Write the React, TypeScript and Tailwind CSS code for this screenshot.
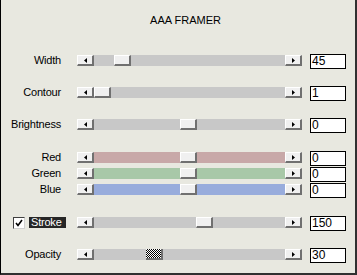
import React from "react";

function ArrowBtn({ dir }: { dir: "l" | "r" }) {
  return (
    <div className="w-[17px] h-[11px] shrink-0 bg-[#f0f0f0] border-t border-l border-t-white border-l-white border-r-2 border-b-2 border-r-[#707070] border-b-[#707070] flex items-center justify-center">
      <svg width="3" height="5" viewBox="0 0 3 5">
        {dir === "l" ? (
          <polygon points="3,0 3,5 0,2.5" fill="#000" />
        ) : (
          <polygon points="0,0 0,5 3,2.5" fill="#000" />
        )}
      </svg>
    </div>
  );
}

function Slider({
  thumb,
  track,
  checker,
}: {
  thumb: number;
  track: string;
  checker?: boolean;
}) {
  return (
    <div className={`flex w-[225px] h-[11px] mt-[1px] ${track}`}>
      <ArrowBtn dir="l" />
      <div className="relative flex-1">
        {checker ? (
          <div
            className="absolute top-0 w-[17px] h-[11px] border-r-2 border-b-2 border-r-[#707070] border-b-[#707070] bg-[repeating-conic-gradient(#000_0_25%,#fff_0_50%)] bg-[length:2px_2px]"
            style={{ left: thumb }}
          />
        ) : (
          <div
            className="absolute top-0 w-[17px] h-[11px] bg-[#f0f0f0] border-t border-l border-t-white border-l-white border-r-2 border-b-2 border-r-[#707070] border-b-[#707070]"
            style={{ left: thumb }}
          />
        )}
      </div>
      <ArrowBtn dir="r" />
    </div>
  );
}

function Row({
  label,
  value,
  thumb,
  track = "bg-[#c8c8c8]",
  mt,
  checker,
  stroke,
}: {
  label: string;
  value: string;
  thumb: number;
  track?: string;
  mt: string;
  checker?: boolean;
  stroke?: boolean;
}) {
  return (
    <div className={`flex items-start h-[16px] ${mt}`}>
      {stroke ? (
        <div className="w-[76px] flex items-start pl-[12px] mt-[1px]">
          <div className="w-[12px] h-[12px] bg-white border border-t-[#404040] border-l-[#404040] border-r-[#d0d0d0] border-b-[#d0d0d0] flex items-center justify-center">
            <svg width="8" height="8" viewBox="0 0 8 8">
              <polyline points="1,4 3,6.5 7,1" fill="none" stroke="#000" strokeWidth="1.6" />
            </svg>
          </div>
          <div className="ml-[4px] w-[37px] h-[11px] bg-[#262626] text-white text-[11px] leading-[11px] tracking-[-0.2px] pl-[2px]">
            {label}
          </div>
        </div>
      ) : (
        <div className="w-[76px] pr-[16px] text-right text-[11px] leading-[13px] tracking-[-0.2px] text-black">
          {label}
        </div>
      )}
      <Slider thumb={thumb} track={track} checker={checker} />
      <div className="ml-[8px] w-[36px] h-[15px] bg-white border border-black text-[12px] leading-[13px] pl-[1px] text-black">
        {value}
      </div>
    </div>
  );
}

export default function App() {
  return (
    <div className="w-[357px] h-[275px] bg-[#e8e8e0] border-l border-l-black border-r-2 border-r-[#303030] border-b-2 border-b-[#303030] flex flex-col font-['Liberation_Sans',Arial,sans-serif]">
      <div className="mt-[14px] pl-[15px] flex justify-center text-[11px] leading-[13px] text-black">
        AAA FRAMER
      </div>
      <Row label="Width" value="45" thumb={20} mt="mt-[27px]" />
      <Row label="Contour" value="1" thumb={0} mt="mt-[16px]" />
      <Row label="Brightness" value="0" thumb={86} mt="mt-[16px]" />
      <Row label="Red" value="0" thumb={86} track="bg-[#c8a8a8]" mt="mt-[17px]" />
      <Row label="Green" value="0" thumb={86} track="bg-[#a8c8a8]" mt="mt-0" />
      <Row label="Blue" value="0" thumb={86} track="bg-[#98acdc]" mt="mt-0" />
      <Row label="Stroke" value="150" thumb={102} mt="mt-[17px]" stroke />
      <Row label="Opacity" value="30" thumb={52} mt="mt-[16px]" checker />
    </div>
  );
}
